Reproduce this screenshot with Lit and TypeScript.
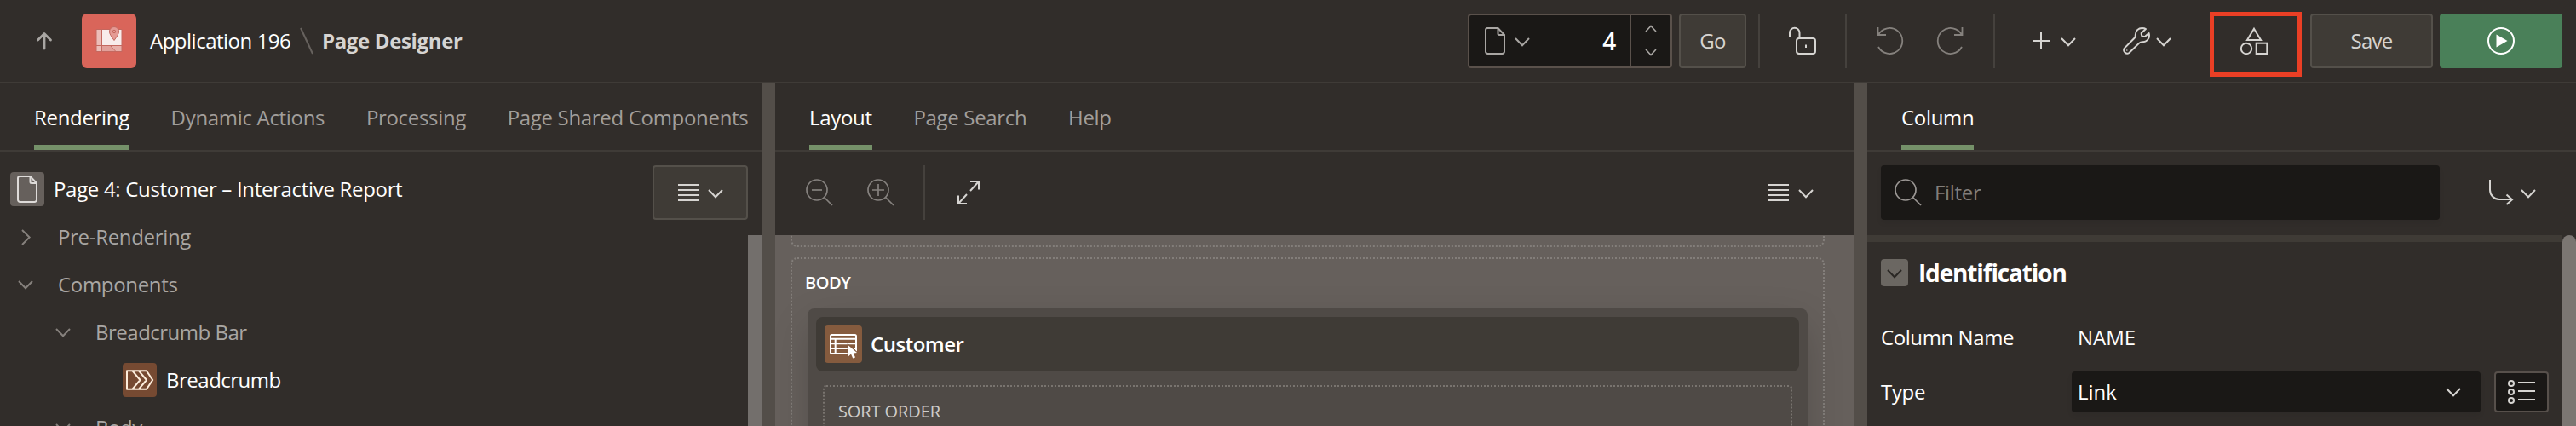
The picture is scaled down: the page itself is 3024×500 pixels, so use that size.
import { LitElement, html, css, svg, nothing, TemplateResult } from "lit";
import { customElement } from "lit/decorators.js";
import { classMap } from "lit/directives/class-map.js";

const icon = (w: number, h: number, body: TemplateResult<2>, sw = 2) =>
  html`<svg width=${w} height=${h} viewBox="0 0 ${w} ${h}" fill="none" stroke="currentColor" stroke-width=${sw}>${body}</svg>`;

const chevron = () => icon(18, 11, svg`<path d="M1 1L9 9.2L17 1"/>`);
const chevronRight = () => icon(11, 19, svg`<path d="M1 1L9.6 9.5L1 18"/>`);
const chevronSmall = (up: boolean) => icon(14, 9, up ? svg`<path d="M1 8L7 1.4L13 8"/>` : svg`<path d="M1 1L7 7.6L13 1"/>`, 1.6);
const page = () => icon(24, 32, svg`<path d="M3 1H15.5L23 9V28.5A2.5 2.5 0 0 1 20.5 31H3.5A2.5 2.5 0 0 1 1 28.5V3.2A2.2 2.2 0 0 1 3 1Z"/><path d="M15.5 1V7.5A1.500 1.500 0 0 0 17 9H23"/>`);
const lines = () => icon(24, 20, svg`<path d="M0 1H24M0 7H24M0 13H24M0 19H24"/>`);
const loupe = (sign = "") => icon(32, 32, svg`<circle cx="13" cy="13" r="12"/><path d="M21.500 21.500L31 31"/><path d=${sign}/>`, 1.7);

const tree = [
  { label: "Pre-Rendering", level: 0, open: false },
  { label: "Components", level: 0, open: true },
  { label: "Breadcrumb Bar", level: 1, open: true, snug: true },
  { label: "Breadcrumb", level: 2, open: false, leaf: true, snug: true },
  { label: "Body", level: 1, open: true, snug: true },
];

@customElement("app-root")
class AppRoot extends LitElement {
  static styles = css`
    :host { display: block; width: 3024px; height: 500px; overflow: hidden; background: #312d2a; color: #fff;
      font: 24px/32px "Open Sans", "Noto Sans", sans-serif; letter-spacing: -0.32px; }
    * { box-sizing: border-box; }
    svg { display: block; flex: none; overflow: visible; }
    span { white-space: nowrap; }
    .snug { letter-spacing: -0.5px; }

    .header { height: 98px; border-bottom: 2px solid #3f3b37; display: flex; align-items: center; padding: 0 16px 0 43px; }
    .back { color: #a9a6a3; width: 53px; }
    .logo { width: 64px; height: 64px; border-radius: 6px; background: #d9655a; display: grid; place-items: center; margin-right: 16px; }
    .logo svg { margin-top: -2px; }
    .appname { width: 176px; letter-spacing: -0.5px; }
    .slash { color: #67625e; margin-right: 10px; }
    .title { font-weight: 700; letter-spacing: -0.35px; color: #d6d4d2; }
    .tools { margin-left: auto; display: flex; align-items: center; }
    .field { width: 240px; height: 64px; border: 2px solid #5a514b; border-radius: 4px; background: #1a1816; display: flex; align-items: center; color: #a9a6a3; padding-left: 18px; margin-right: 8px; }
    .field .chev { margin: 2px 0 0 11px; }
    .num { flex: 1; text-align: right; color: #fff; font-size: 28px; font-weight: 600; padding-right: 16px; }
    .spin { width: 48px; height: 60px; border-left: 2px solid #5a514b; display: flex; flex-direction: column; justify-content: space-between; align-items: center; padding: 11px 0 12px; }
    .btn { height: 64px; border: 2px solid #54504a; border-radius: 4px; background: #3f3b36; color: #d6d4d1; display: flex; align-items: center; justify-content: center; font-weight: 500; letter-spacing: -0.8px; }
    .go { width: 79px; margin-right: 14px; }
    .save { width: 144px; margin: 0 8px 0 10px; }
    .run { width: 144px; background: #4a8059; border-color: #4a8059; color: #fff; }
    .sep { width: 2px; height: 64px; background: #45413d; }
    .lock { width: 100px; display: grid; place-items: center; color: #d6d4d1; }
    .history { width: 172px; padding: 0 35px; display: flex; justify-content: space-between; color: #85817d; }
    .menus { display: flex; gap: 55px; padding: 0 45px 0 44px; color: #d6d4d1; }
    .menu { display: flex; align-items: center; gap: 13px; }
    .menu.tight { gap: 7px; }
    .menu .chev { margin-top: 2px; }
    .shapes { position: relative; width: 108px; padding-left: 36px; color: #d6d4d1; }
    .mark { position: absolute; left: 0; top: -18px; width: 108px; height: 76px; border: 5px solid #ea3f25; }

    .main { display: grid; grid-template-columns: 894px 16px 1266px 16px 832px; height: 402px; }
    .main > div { min-width: 0; height: 402px; overflow: hidden; }
    .split { background: #534e49; }
    .tabs { flex: none; height: 80px; border-bottom: 2px solid #3f3b37; display: flex; gap: 48.7px; padding-left: 40px; color: #a19e9b; }
    .tab { height: 78px; line-height: 79px; }
    .tab.on { color: #fff; box-shadow: inset 0 -6px #759169; }

    .left { display: flex; flex-direction: column; }
    .pagebar { flex: none; height: 98px; padding: 16px 16px 0 12px; display: flex; align-items: flex-start; }
    .pageicon { width: 40px; height: 40px; margin-top: 8px; border-radius: 4px; background: #66605c; color: #dedbd9; display: grid; place-items: center; margin-right: 11px; }
    .pagename { line-height: 56px; flex: 1; }
    .listbtn { width: 112px; gap: 11px; }
    .listbtn .chev { margin-top: 2px; }
    .treewrap { display: flex; flex: 1; min-height: 0; }
    .tree { flex: 1; margin-top: -26px; }
    .thumb { width: 16px; height: 224px; background: #736f6c; }
    .row { height: 56px; display: flex; align-items: center; color: #a9a6a3; }
    .row .tw { width: 34px; margin-left: 12px; padding-left: 9px; margin-right: 22px; color: #86817d; }
    .row .tw.closed { padding-left: 13px; }
    .l1 { padding-left: 44px; }
    .l2 { padding-left: 144px; color: #fff; }
    .crumb { width: 40px; height: 40px; border-radius: 4px; background: #764a32; color: #fdeedd; display: grid; place-items: center; margin-right: 11px; }

    .bar { height: 98px; display: flex; align-items: flex-start; padding: 16px 47px 0 36px; }
    .bar > * { height: 64px; display: flex; align-items: center; }
    .bar .sep { display: block; margin: 0 38px 0 34px; }
    .zooms { gap: 40px; color: #86827f; }
    .expand { color: #d6d4d1; flex: 1; }
    .bmenu { gap: 11px; color: #d6d4d1; }
    .bmenu .chev { margin-top: 2px; }
    .canvas { height: 224px; overflow: hidden; background: #66605c; padding: 0 34px 0 18px; }
    .dots { border: 2px dotted #837e7a; border-radius: 8px; }
    .prev { height: 40px; margin-top: -26px; }
    .body { height: 300px; margin-top: 12px; padding: 14px 18px 0 18px; }
    .cap { display: block; font-size: 20px; line-height: 28px; letter-spacing: -0.1px; }
    .body > .cap { font-weight: 600; letter-spacing: -0.5px; margin-left: -3px; }
    .region { margin-top: 16px; height: 300px; border-radius: 8px; background: #4f4a46; padding: 10px; box-shadow: 0 16px 48px -6px rgba(0, 0, 0, .22); }
    .rhead { height: 64px; border-radius: 8px; background: #3f3b36; display: flex; align-items: center; padding-left: 10px; font-weight: 600; }
    .ricon { width: 44px; height: 44px; border-radius: 4px; background: #855b3e; display: grid; place-items: center; margin-right: 10px; }
    .sort { height: 200px; margin: 16px 8px 0; padding: 15px 0 0 16px; border-color: #79746f; border-radius: 4px; color: #d0cdca; }

    .filterbar { height: 98px; padding: 16px 47px 0 16px; display: flex; justify-content: space-between; }
    .filter { width: 656px; height: 64px; border-radius: 4px; background: #1a1816; box-shadow: 0 4px 6px rgba(0,0,0,.06); display: flex; align-items: center; gap: 15px; padding-left: 16px; color: #827e7a; }
    .filter svg { color: #9b9794; }
    .goto { height: 64px; display: flex; align-items: center; gap: 9px; color: #d6d4d1; }
    .goto .chev { margin-top: 2px; }
    .props { display: flex; height: 224px; }
    .plist { flex: 1; border-top: 8px solid #3f3b36; padding: 20px 16px 0; }
    .pthumb { width: 16px; height: 260px; background: #7b7672; border-radius: 8px; }
    .group { height: 32px; display: flex; align-items: center; font-size: 28px; font-weight: 700; letter-spacing: -1.15px; gap: 12px; }
    .fold { width: 32px; height: 32px; border-radius: 4px; background: #6b6762; color: #2a2724; display: grid; place-items: center; padding-top: 2px; }
    .prop { display: grid; grid-template-columns: 224px 480px 64px; align-items: center; height: 48px; }
    .prop.name { height: 68px; margin: 26px 0 6px; letter-spacing: -0.42px; }
    .prop .val { padding-left: 7px; letter-spacing: 0; }
    .select { height: 48px; border-radius: 4px; background: #1a1816; display: flex; align-items: center; justify-content: space-between; padding: 0 23px 0 7px; letter-spacing: 0; box-shadow: 0 4px 6px rgba(0,0,0,.06); }
    .select svg { color: #d6d4d1; }
    .lov { height: 48px; width: 64px; margin-left: 16px; border: 2px solid #57504b; border-radius: 4px; background: #1a1816; display: grid; place-items: center; color: #d6d4d1; }
  `;

  private tabs(names: string[]) {
    return html`<div class="tabs">${names.map((n, i) => html`<span class=${classMap({ tab: true, on: i === 0 })}>${n}</span>`)}</div>`;
  }

  private header() {
    return html`<div class="header">
      <div class="back">${icon(18, 20, svg`<path d="M9 19V2M1.5 9L9 1.600L16.500 9" stroke-linecap="round" stroke-linejoin="round"/>`, 2.8)}</div>
      <div class="logo">${icon(32, 34, svg`<g stroke="#c4685f" stroke-width="1"><path d="M1 4.500H31V30.500H1Z" fill="#f8eceb" stroke="none"/><path d="M1 4.500H7.500V30.500H1Z" fill="#ecbdb8" stroke="none"/><path d="M7.500 23.500H17.500L24 30.500H7.500Z" fill="#e2a09a" stroke="none"/><path d="M17.500 23.500H31V30.500H24Z" fill="#e8b0aa" stroke="none"/><path d="M1 4.500H31V30.500H1ZM7.500 4.500V30.500M1 23.500H31M17.500 23.500L24 30.500"/><path d="M22 17.500C18.500 12.500 16.500 10 16.500 7A5.500 5.500 0 0 1 27.500 7C27.500 10 25.500 12.500 22 17.500Z" fill="#e59a94"/><circle cx="22" cy="7" r="1.700"/></g>`)}</div>
      <span class="appname">Application 196</span>
      <div class="slash">${icon(16, 32, svg`<path d="M1 1L15 31"/>`)}</div>
      <span class="title">Page Designer</span>
      <div class="tools">
        <div class="field">${page()}<div class="chev">${chevron()}</div><span class="num">4</span>
          <div class="spin">${chevronSmall(true)}${chevronSmall(false)}</div></div>
        <div class="btn go">Go</div>
        <div class="sep"></div>
        <div class="lock">${icon(32, 32, svg`<rect x="9" y="13" width="22" height="18" rx="3"/><path d="M1 11.500V6.500A5.750 5.750 0 0 1 12.500 6.500V13M20 20.500V24"/>`)}</div>
        <div class="sep"></div>
        <div class="history">
          ${icon(32, 32, svg`<path d="M1.500 0V9H11M2 9A15 15 0 1 1 2 23"/>`, 1.8)}
          ${icon(32, 32, svg`<path d="M30.500 0V9H21M30 9A15 15 0 1 0 30 23"/>`, 1.8)}
        </div>
        <div class="sep"></div>
        <div class="menus">
          <div class="menu">${icon(20, 20, svg`<path d="M10 0V20M0 10H20"/>`)}<div class="chev">${chevron()}</div></div>
          <div class="menu tight">${icon(32, 32, svg`<path stroke-linejoin="round" d="M1.800 24.600L13.600 12.800Q15 11.400 14.800 9C14.600 4 18.500 1 22.500 1Q25.500 1 27 2L22 6.500Q21.500 7 21.800 8.200L22.400 10.400L24.800 11Q25.800 11.200 26.400 10.600L30.600 7Q31 8 31 10C31 14 27.500 17.200 24 17.200Q20.800 17 19.200 18.600L7.400 30A4 4 0 0 1 1.800 24.600Z"/><circle cx="4.800" cy="27" r=".8" fill="currentColor" stroke="none"/>`)}<div class="chev">${chevron()}</div></div>
        </div>
        <div class="shapes">${icon(32, 32, svg`<path d="M16 1.800L24 15H8Z"/><circle cx="7" cy="25" r="6.200"/><rect x="18.700" y="18.700" width="12.600" height="12.300"/>`)}<div class="mark"></div></div>
        <div class="btn save">Save</div>
        <div class="btn run">${icon(32, 32, svg`<circle cx="16" cy="16" r="15"/><path d="M10.500 8.500L23.500 16L10.500 23.500Z" fill="currentColor" stroke="none"/>`)}</div>
      </div>
    </div>`;
  }

  private left() {
    return html`<div class="left">
      ${this.tabs(["Rendering", "Dynamic Actions", "Processing", "Page Shared Components"])}
      <div class="pagebar"><div class="pageicon">${page()}</div><span class="pagename">Page 4: Customer – Interactive Report</span>
        <div class="btn listbtn">${lines()}<div class="chev">${chevron()}</div></div></div>
      <div class="treewrap"><div class="tree">
        ${tree.map((r) => html`<div class="row l${r.level}">
          ${r.leaf
            ? html`<div class="crumb">${icon(32, 24, svg`<path stroke-linejoin="round" d="M1 1.300H24L31.200 12L24 22.700H1ZM7.500 1.300L16.500 12L7.500 22.700M15 1.300L24 12L15 22.700"/>`)}</div>`
            : html`<div class="tw ${r.open ? "" : "closed"}">${r.open ? chevron() : chevronRight()}</div>`}
          <span class=${r.snug ? "snug" : nothing}>${r.label}</span></div>`)}
      </div><div class="thumb"></div></div>
    </div>`;
  }

  private center() {
    return html`<div>
      ${this.tabs(["Layout", "Page Search", "Help"])}
      <div class="bar">
        <div class="zooms">${loupe("M7 13H19")}${loupe("M6 13H20M13 6V20")}</div>
        <div class="sep"></div>
        <div class="expand">${icon(26, 28, svg`<path d="M15 1H25V10.500M25 1L15 12M1 17.500V27H11M1 27L11 16"/>`)}</div>
        <div class="bmenu">${lines()}<div class="chev">${chevron()}</div></div>
      </div>
      <div class="canvas">
        <div class="dots prev"></div>
        <div class="dots body"><span class="cap">BODY</span>
          <div class="region">
            <div class="rhead"><div class="ricon">${icon(32, 32, svg`<rect x="1" y="5" width="30" height="22" rx="1.500"/><path d="M1 9.700H31M1 15.300H31M1 21H31M6.700 9.700V27"/><path d="M22 17.500V30.200L25 27.600L27.200 32.600L30 31.400L27.800 26.500L32 26.100Z" fill="#fff" stroke="#855b3e" stroke-width="2.400" paint-order="stroke"/>`)}</div><span class="snug">Customer</span></div>
            <div class="dots sort"><span class="cap">SORT ORDER</span></div>
          </div>
        </div>
      </div>
    </div>`;
  }

  private right() {
    return html`<div>
      ${this.tabs(["Column"])}
      <div class="filterbar">
        <div class="filter">${loupe()}<span>Filter</span></div>
        <div class="goto">${icon(28, 30, svg`<path d="M1 0V12A11 11 0 0 0 12 23H27M20.500 17.500L27 23.200L20.500 29"/>`)}<div class="chev">${chevron()}</div></div>
      </div>
      <div class="props"><div class="plist">
        <div class="group"><div class="fold">${chevron()}</div><span>Identification</span></div>
        <div class="prop name"><span>Column Name</span><span class="val">NAME</span></div>
        <div class="prop"><span>Type</span><div class="select"><span>Link</span>${chevron()}</div>
          <div class="lov">${icon(32, 28, svg`<circle cx="4" cy="4" r="3"/><circle cx="4" cy="14" r="3"/><circle cx="4" cy="24" r="3"/><path d="M12 3H32M12 13H32M12 23H32"/>`)}</div></div>
      </div><div class="pthumb"></div></div>
    </div>`;
  }

  render() {
    return html`${this.header()}<div class="main">${this.left()}<div class="split"></div>${this.center()}<div class="split"></div>${this.right()}</div>`;
  }
}
